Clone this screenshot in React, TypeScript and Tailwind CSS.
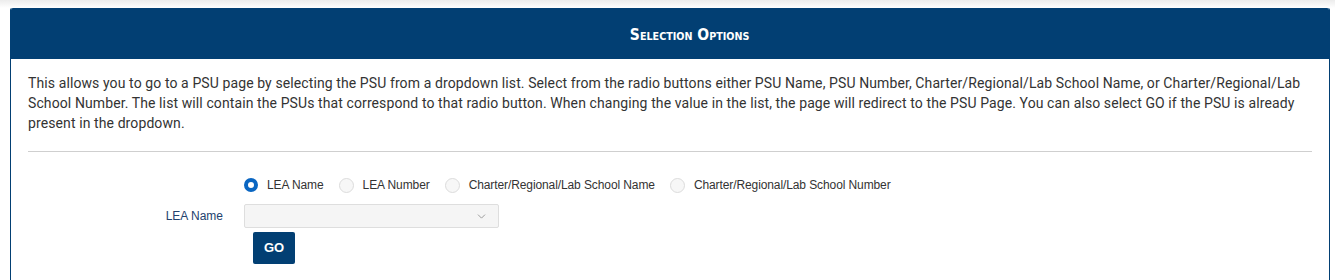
import { ChevronDown } from "lucide-react"

const options = [
  "LEA Name",
  "LEA Number",
  "Charter/Regional/Lab School Name",
  "Charter/Regional/Lab School Number",
]

export default function App() {
  return (
    <div className="min-h-[280px] bg-white font-['Liberation_Sans',Arial,sans-serif]">
      <div className="h-[8px] bg-gradient-to-b from-[#ececec] to-white" />
      <div className="ml-[10px] w-[1320px] rounded-t-[2px] border border-t-0 border-[#023f73]">
        {/* Header */}
        <div className="flex h-[51px] items-center justify-center rounded-t-[2px] bg-[#023f73] pl-[40px] pt-[3px]">
          <h2 className="origin-center scale-x-[0.97] font-['DejaVu_Sans_Condensed',sans-serif] text-[16px] font-bold text-white [font-variant:small-caps]">
            Selection Options
          </h2>
        </div>

        <div className="px-[17px] pb-[20px] pt-[14px]">
          <p className="font-['Roboto',sans-serif] text-[14px] leading-[20px] tracking-[0.1px] text-[#333]">
            This allows you to go to a PSU page by selecting the PSU from a dropdown list. Select from the radio buttons
            either PSU Name, PSU Number, Charter/Regional/Lab School Name, or Charter/Regional/Lab School Number. The list
            will contain the PSUs that correspond to that radio button. When changing the value in the list, the page will
            redirect to the PSU Page. You can also select GO if the PSU is already present in the dropdown.
          </p>
          <hr className="mt-[18px] border-t border-[#cfcfcf]" />

          {/* Radio row */}
          <div className="mt-[23px] flex h-[20px] items-center gap-[15px] pl-[216px] text-[12px] tracking-[-0.1px] text-[#333]">
            {options.map((o, i) => (
              <label key={o} className="flex items-center gap-[9px]">
                {i === 0 ? (
                  <span className="h-[14px] w-[14px] rounded-full border-[4px] border-[#0a66c2] bg-white" />
                ) : (
                  <span className="h-[15px] w-[15px] rounded-full border border-[#dcdcdc] bg-[#f7f7f7]" />
                )}
                <span>{o}</span>
              </label>
            ))}
          </div>

          {/* Select row */}
          <div className="mt-[9px] flex items-center">
            <div className="w-[195px] text-right text-[12px] text-[#23426e]">LEA Name</div>
            <div className="ml-[21px] flex h-[24px] w-[255px] items-center justify-end rounded-[2px] border border-[#dedede] bg-[#f5f5f5] pr-[10px]">
              <ChevronDown className="h-[13px] w-[13px] text-[#888]" strokeWidth={1.5} />
            </div>
          </div>
          <div className="mt-[4px] pl-[225px]">
            <button className="h-[32px] w-[42px] rounded-[2px] bg-[#023f73] text-[13px] font-bold text-white">
              GO
            </button>
          </div>
        </div>
      </div>
    </div>
  )
}
